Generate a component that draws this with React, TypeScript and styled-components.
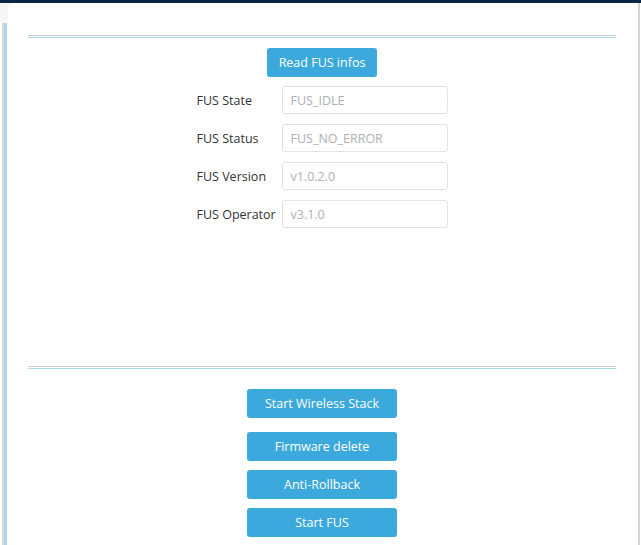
import React from "react";
import styled, { createGlobalStyle } from "styled-components";

const Global = createGlobalStyle`
  html, body { margin: 0; padding: 0; background: #ffffff; }
  body { font-family: "Open Sans", "Noto Sans", sans-serif; }
  * { box-sizing: border-box; }
`;

const Page = styled.div`
  width: 641px;
  height: 545px;
  display: flex;
  flex-direction: column;
  overflow: hidden;
  background: #ffffff;
`;

const TopBar = styled.div`
  height: 3px;
  background: #0b2545;
  flex: none;
`;

const Body = styled.div`
  flex: 1;
  display: flex;
  background: #f6f6f6;
`;

const LeftRail = styled.div`
  width: 8px;
  display: flex;
  flex-direction: column;
  background: #ffffff;
`;

const RailTop = styled.div`
  height: 20px;
  background: #f6f6f6;
`;

const RailLines = styled.div`
  flex: 1;
  margin-left: 2px;
  width: 5px;
  border-left: 2px solid #d6d9dc;
  background: #aad9ea;
`;

const Panel = styled.div`
  flex: 1;
  background: #ffffff;
  border-radius: 6px 6px 0 0;
  padding: 32px 20px 0;
  display: flex;
  flex-direction: column;
  align-items: center;
`;

const RightRail = styled.div`
  width: 5px;
  display: flex;
  justify-content: flex-end;
  background: #ffffff;
`;

const RightLine = styled.div`
  width: 2px;
  margin-right: 1px;
  background: #d4d4d4;
`;

const Separator = styled.div<{ $after: number }>`
  align-self: stretch;
  height: 3px;
  border-top: 1px solid #c9cdd0;
  border-bottom: 1px solid #a9dceb;
  margin-bottom: ${(p) => p.$after}px;
  flex: none;
`;

const Button = styled.button<{ $w: number; $mb?: number }>`
  width: ${(p) => p.$w}px;
  height: 29px;
  border: none;
  border-radius: 3px;
  background: #3ca9dc;
  color: #ffffff;
  font-family: "Open Sans", "Noto Sans", sans-serif;
  font-size: 12.5px;
  padding: 0;
  margin-bottom: ${(p) => p.$mb ?? 0}px;
  flex: none;
`;

const Form = styled.div`
  display: flex;
  flex-direction: column;
  gap: 10px;
  margin-top: 9px;
`;

const Row = styled.div`
  display: flex;
  align-items: center;
`;

const Label = styled.span`
  width: 85px;
  font-size: 12.5px;
  color: #333333;
`;

const Field = styled.div`
  width: 166px;
  height: 28px;
  border: 1px solid #e3e3e3;
  border-radius: 3px;
  padding-left: 8px;
  display: flex;
  align-items: center;
  font-size: 12.5px;
  color: #b0b0b0;
`;

const Spacer = styled.div<{ $h: number }>`
  height: ${(p) => p.$h}px;
  flex: none;
`;

const rows = [
  ["FUS State", "FUS_IDLE"],
  ["FUS Status", "FUS_NO_ERROR"],
  ["FUS Version", "v1.0.2.0"],
  ["FUS Operator", "v3.1.0"],
];

export default function App() {
  return (
    <Page>
      <Global />
      <TopBar />
      <Body>
        <LeftRail>
          <RailTop />
          <RailLines />
        </LeftRail>
        <Panel>
          <Separator $after={10} />
          <Button $w={110}>Read FUS infos</Button>
          <Form>
            {rows.map(([l, v]) => (
              <Row key={l}>
                <Label>{l}</Label>
                <Field>{v}</Field>
              </Row>
            ))}
          </Form>
          <Spacer $h={138} />
          <Separator $after={20} />
          <Button $w={150} $mb={14}>Start Wireless Stack</Button>
          <Button $w={150} $mb={9}>Firmware delete</Button>
          <Button $w={150} $mb={9}>Anti-Rollback</Button>
          <Button $w={150}>Start FUS</Button>
        </Panel>
        <RightRail>
          <RightLine />
        </RightRail>
      </Body>
    </Page>
  );
}
